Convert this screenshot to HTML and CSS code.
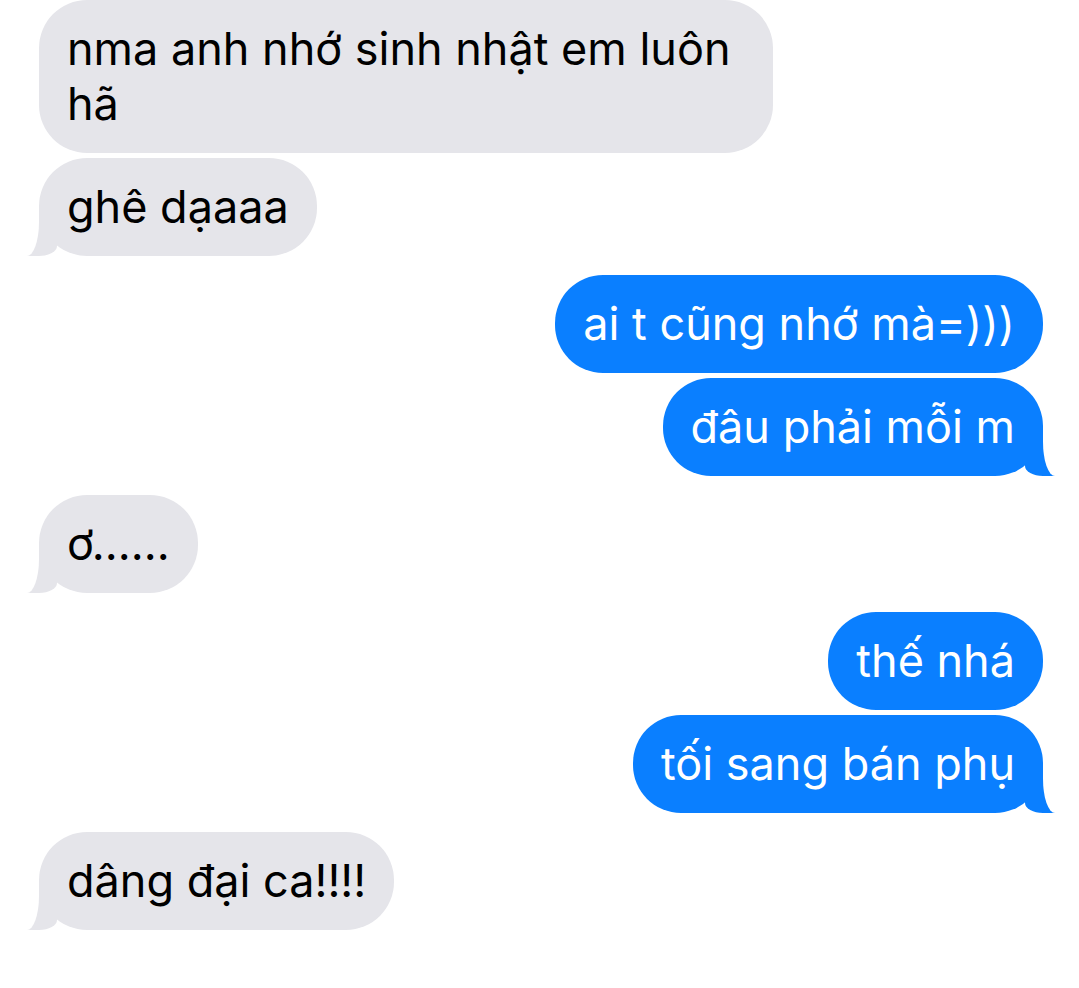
FILE: index.html
```html
<!doctype html>
<html lang="vi">
  <head>
    <meta charset="UTF-8" />
    <meta name="viewport" content="width=device-width, initial-scale=1.0" />
    <title>Tin nhắn</title>
    <link rel="stylesheet" href="styles.css">
  </head>
  <body>
    <div class="chat">
      <div class="group them">
        <div class="bubble wide">nma anh nhớ sinh nhật em luôn hã</div>
        <div class="bubble tail">ghê dạaaa</div>
      </div>

      <div class="group me">
        <div class="bubble">ai t cũng nhớ mà=)))</div>
        <div class="bubble tail">đâu phải mỗi m</div>
      </div>

      <div class="group them">
        <div class="bubble tail">ơ......</div>
      </div>

      <div class="group me">
        <div class="bubble">thế nhá</div>
        <div class="bubble tail">tối sang bán phụ</div>
      </div>

      <div class="group them">
        <div class="bubble tail">dâng đại ca!!!!</div>
      </div>
    </div>
  </body>
</html>
```

FILE: styles.css
```css
* {
  margin: 0;
  padding: 0;
  box-sizing: border-box;
}

body {
  font-family: Inter, "Noto Sans", sans-serif;
  background: #fff;
  overflow: hidden;
}

.chat {
  display: flex;
  flex-direction: column;
  gap: 19.5px;
  padding: 0 36px 0 39px;
}

.group {
  display: flex;
  flex-direction: column;
  gap: 5.5px;
}

.group.them {
  align-items: flex-start;
}

.group.me {
  align-items: flex-end;
}

.bubble {
  position: relative;
  max-width: 734px;
  padding: 21.25px 28px;
  border-radius: 48px;
  font-size: 45px;
  line-height: 55px;
}

.them .bubble {
  background: #e5e5ea;
  color: #000;
}

.me .bubble {
  background: #0a7fff;
  color: #fff;
}

/* tail: coloured block plus a white block carving the curve */
.bubble.tail::before,
.bubble.tail::after {
  content: "";
  position: absolute;
  bottom: 0;
  height: 50px;
}

.me .bubble.tail::before {
  right: -12px;
  width: 30px;
  background: #0a7fff;
  border-bottom-left-radius: 18px 10px;
}

.me .bubble.tail::after {
  right: -30px;
  width: 30px;
  background: #fff;
  border-bottom-left-radius: 12px 34px;
}

.them .bubble.tail::before {
  left: -12px;
  width: 30px;
  background: #e5e5ea;
  border-bottom-right-radius: 18px 10px;
}

.them .bubble.tail::after {
  left: -30px;
  width: 30px;
  background: #fff;
  border-bottom-right-radius: 12px 34px;
}
```
